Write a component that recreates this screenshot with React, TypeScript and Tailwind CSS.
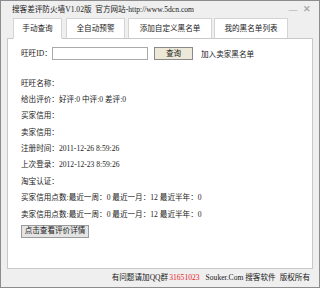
const font = { fontFamily: '"Liberation Serif", "Noto Sans CJK SC", serif' };

const tabs = [
  { label: "手动查询", w: "w-[49px]", ml: "ml-0" },
  { label: "全自动预警", w: "w-[59px]", ml: "ml-[4px]" },
  { label: "添加自定义黑名单", w: "w-[84px]", ml: "ml-[3px]" },
  { label: "我的黑名单列表", w: "w-[74px]", ml: "ml-[2px]" },
];

const rows = [
  "旺旺名称：",
  "给出评价：好评:0 中评:0 差评:0",
  "买家信用：",
  "卖家信用：",
  "注册时间：2011-12-26 8:59:26",
  "上次登录：2012-12-23 8:59:26",
  "淘宝认证：",
  "买家信用点数:最近一周：0 最近一月：12 最近半年：0",
  "卖家信用点数:最近一周：0 最近一月：12 最近半年：0",
];

export default function App() {
  return (
    <div
      className="w-[320px] h-[288px] bg-[#efefef] border border-[#8c8c8c] flex flex-col text-[7.6px] text-[#222] overflow-hidden"
      style={font}
    >
      {/* Title bar */}
      <div className="h-[17px] flex items-center pl-[11px] pr-[5px] shrink-0">
        <span className="flex-1 whitespace-nowrap">
          搜客差评防火墙V1.02版&nbsp; 官方网站-http://www.5dcn.com
        </span>
        <span className="text-[#aaa] w-[14px] text-center text-[9px]">—</span>
        <span className="text-[#aaa] w-[14px] text-center font-bold text-[9px]">✕</span>
      </div>

      {/* Tabs */}
      <div className="flex h-[21px] pl-[12px] items-end shrink-0">
        {tabs.map((t, i) => (
          <div
            key={t.label}
            className={`${t.w} ${t.ml} h-[21px] bg-white border border-[#d4d4d4] ${
              i === 0 ? "border-b-white" : "border-b-[#c8c8c8]"
            } flex items-center justify-center whitespace-nowrap relative z-10`}
          >
            {t.label}
          </div>
        ))}
      </div>

      {/* Panel */}
      <div className="mx-[6px] -mt-px h-[231px] bg-white border border-[#c8c8c8] pl-[13px] pt-[7px] shrink-0">
        <div className="flex items-center h-[15px]">
          <span className="w-[31px] whitespace-nowrap">旺旺ID：</span>
          <div className="w-[96px] h-[13px] border border-[#a9a9a9] bg-white" />
          <button className="ml-[6px] w-[39px] h-[13px] bg-[#ece9d8] border border-[#8a8a8a] flex items-center justify-center leading-none">
            查询
          </button>
          <span className="ml-[8px] mt-[3px] whitespace-nowrap">加入卖家黑名单</span>
        </div>
        <div className="mt-[14px] flex flex-col">
          {rows.map((r) => (
            <div key={r} className="h-[16.4px] flex items-center whitespace-nowrap">
              {r}
            </div>
          ))}
        </div>
        <button className="mt-[2px] w-[68px] h-[13px] bg-[#e4e4e4] border border-[#9a9a9a] flex items-center justify-center leading-none whitespace-nowrap">
          点击查看评价详情
        </button>
      </div>

      {/* Footer */}
      <div className="flex-1 flex items-center justify-end pr-[9px] whitespace-nowrap">
        <span>有问题请加QQ群</span>
        <span className="text-[#e8201c] ml-[1px]">31651023</span>
        <span className="ml-[6px]">Souker.Com 搜客软件</span>
        <span className="ml-[4px]">版权所有</span>
      </div>
    </div>
  );
}
